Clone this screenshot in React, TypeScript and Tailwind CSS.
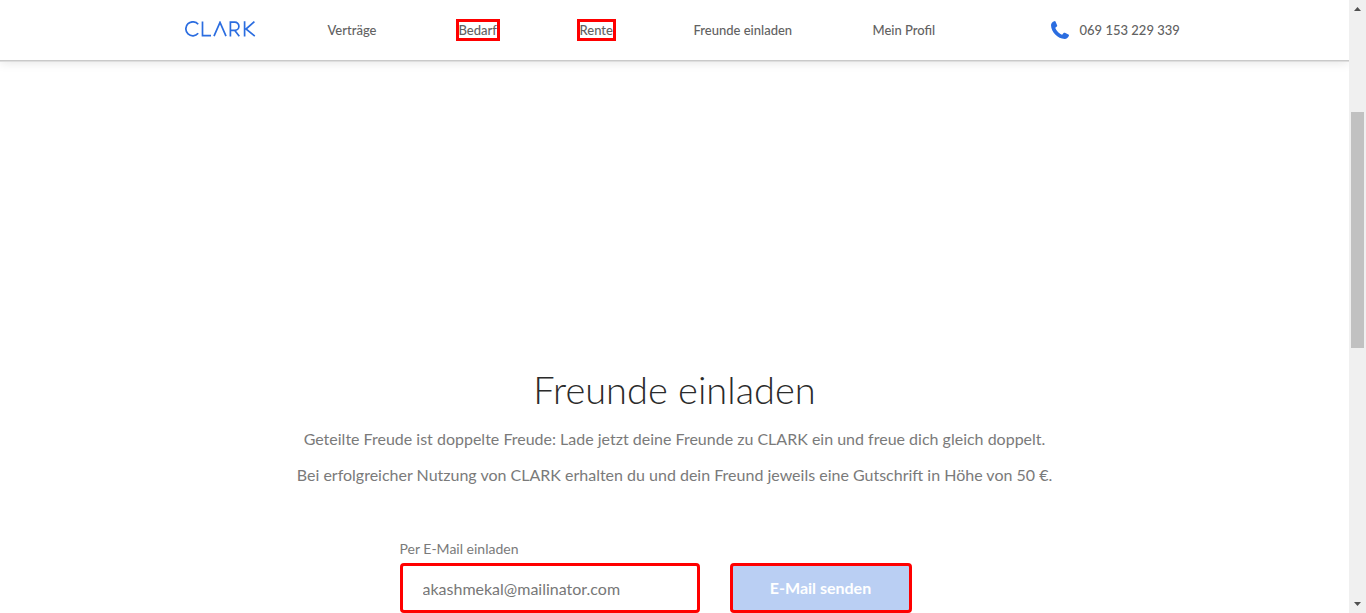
import React from "react";

function Logo() {
  return (
    <svg viewBox="0 0 71 16" className="h-4 w-[71px]" fill="none" stroke="#2b6de0" strokeWidth="1.7" aria-hidden="true">
      <path d="M13.2 3.3A7 7 0 1 0 13.2 12.3" />
      <path d="M17.5 .4V14.6H26" />
      <path d="M29 15.2L35 1.4L41 15.2" />
      <path d="M45.4 15.4V1.1H49.8A4.1 4.1 0 0 1 49.8 9.3H45.4M49.6 9.3L54.3 15.2" />
      <path d="M59.6 .2V15.4M69.4 .6L61 8L69.8 15.2" />
    </svg>
  );
}

function PhoneIcon() {
  return (
    <svg viewBox="0 0 18 18" className="h-[18px] w-[18px]" fill="#2b6de0" aria-hidden="true">
      <path d="M3.4.2C3.9 0 4.4.2 4.6.7L6.1 4.2C6.3 4.7 6.2 5.1 5.8 5.4L4.3 6.8C5 9.5 8 12.6 11.1 13.7L12.6 12.1C12.9 11.7 13.4 11.6 13.9 11.8L17.4 13.6C17.9 13.8 18.1 14.3 17.9 14.8C17.2 16.8 15.7 18 13.7 18C6.6 17.8.2 11.2 0 4.3C0 2.3 1.3.8 3.4.2Z" />
    </svg>
  );
}

function Header() {
  return (
    <header className="h-[61px] border-b border-[#c9c9c9] bg-white shadow-[0_1px_0_#dedede,0_2px_10px_rgba(0,0,0,0.1)]">
      <nav className="mx-auto grid h-[60px] max-w-[1000px] grid-cols-[143px_128px_121px_117px_179px_178px_auto] items-center justify-start pl-2.5 text-[13px] leading-4 font-medium text-[#626262]">
        <a href="#start" aria-label="CLARK" className="pb-0.5"><Logo /></a>
        <a href="#vertraege">Verträge</a>
        <a href="#bedarf" className="justify-self-start border-3 border-[#ff0000]">Bedarf</a>
        <a href="#rente" className="justify-self-start border-3 border-[#ff0000]">Rente</a>
        <a href="#freunde">Freunde einladen</a>
        <a href="#profil">Mein Profil</a>
        <a href="tel:069153229339" className="flex items-center gap-[11px] whitespace-nowrap">
          <PhoneIcon />
          069 153 229 339
        </a>
      </nav>
    </header>
  );
}

function ScrollRail() {
  return (
    <div className="flex w-[17px] shrink-0 flex-col items-center bg-[#f0f0f0]" aria-hidden="true">
      <svg viewBox="0 0 17 17" className="h-[17px] w-[17px]" fill="#505050"><path d="M5 11L8.5 7L12 11Z" /></svg>
      <div className="min-h-0 w-[13px] flex-[95]" />
      <div className="min-h-0 w-[13px] flex-[236] bg-[#c1c1c1]" />
      <div className="min-h-0 w-[13px] flex-[248]" />
      <svg viewBox="0 0 17 17" className="h-[17px] w-[17px]" fill="#505050"><path d="M5 6L8.5 10L12 6Z" /></svg>
    </div>
  );
}

export default function App() {
  return (
    <div className="flex min-h-screen bg-white font-[Lato,sans-serif]">
      <div className="min-w-0 flex-1">
        <Header />
        <main className="flex flex-col items-center pt-[304px]">
          <h1 className="text-[38px] leading-12 font-light text-[#2b2b2b]">Freunde einladen</h1>
          <div className="mt-3.5 flex flex-col gap-3 text-center text-base leading-6 text-[#7a7a7a]">
            <p>Geteilte Freude ist doppelte Freude: Lade jetzt deine Freunde zu CLARK ein und freue dich gleich doppelt.</p>
            <p>Bei erfolgreicher Nutzung von CLARK erhalten du und dein Freund jeweils eine Gutschrift in Höhe von 50 €.</p>
          </div>
          <form className="mt-[50px] w-full max-w-[550px]" onSubmit={(e) => e.preventDefault()}>
            <label htmlFor="email" className="block text-sm leading-6 text-[#7a7a7a]">Per E-Mail einladen</label>
            <div className="mt-0.5 flex gap-[30px]">
              <input id="email" type="email" defaultValue="akashmekal@mailinator.com" className="h-[50px] w-[300px] rounded border-3 border-[#ff0000] bg-white px-5 text-base text-[#777] outline-none" />
              <button type="submit" className="h-[50px] w-[182px] rounded border-3 border-[#ff0000] bg-[#bacff3] text-base font-bold text-white">E-Mail senden</button>
            </div>
          </form>
        </main>
      </div>
      <ScrollRail />
    </div>
  );
}
